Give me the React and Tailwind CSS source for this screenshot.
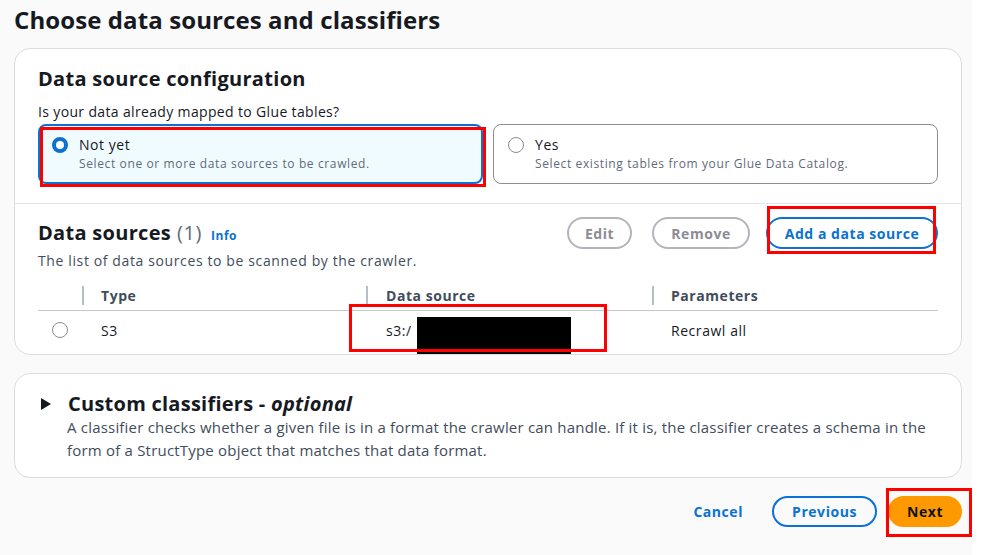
import React from 'react';

const Radio = ({ checked }) =>
    checked ? (
        <span className="w-4 h-4 rounded-full border-[4px] border-[#0972d3] bg-white shrink-0" />
    ) : (
        <span className="w-4 h-4 rounded-full border-[1.5px] border-[#8c8c94] bg-white shrink-0" />
    );

const RedBox = ({ className }) => (
    <div className={`absolute border-[3px] border-[#ff0000] pointer-events-none ${className}`} />
);

export default function App() {
    return (
        <div className="w-[984px] h-[555px] flex bg-white text-[#16191f] overflow-hidden tracking-[0.55px] font-['Open_Sans',sans-serif]">
            <div className="w-[972px] bg-[#fafafa] pl-[14px] pr-[10px]">
                <h1 className="pt-[5px] text-[24px] leading-[30px] font-bold tracking-[0.1px]">Choose data sources and classifiers</h1>

                {/* Data source configuration card */}
                <div className="relative mt-[13px] bg-white border border-[#dcdcdf] rounded-[16px]">
                    <div className="px-[23px] pt-[16px] pb-[19px]">
                        <h2 className="text-[20px] leading-[28px] font-bold tracking-[0.3px]">Data source configuration</h2>
                        <p className="mt-[9px] text-[14px] leading-[20px] tracking-[0.35px]">Is your data already mapped to Glue tables?</p>
                        <div className="mt-[2px] grid grid-cols-2 gap-[10px]">
                            <div className="relative h-[60px] rounded-[8px] border-2 border-[#0972d3] bg-[#f0fbff] flex items-start gap-[11px] pl-[12px] pt-[9px]">
                                <span className="mt-[2px] flex"><Radio checked /></span>
                                <div>
                                    <div className="text-[14px] leading-[20px]">Not yet</div>
                                    <div className="text-[12px] leading-[16px] mt-[1px] text-[#5f6b7a] tracking-[0.62px]">Select one or more data sources to be crawled.</div>
                                </div>
                                <RedBox className="left-0 top-[1px] w-[446px] h-[60px]" />
                            </div>
                            <div className="h-[60px] rounded-[8px] border border-[#8c8c94] bg-white flex items-start gap-[11px] pl-[14px] pt-[10px]">
                                <span className="mt-[2px] flex"><Radio /></span>
                                <div>
                                    <div className="text-[14px] leading-[20px]">Yes</div>
                                    <div className="text-[12px] leading-[16px] mt-[1px] text-[#5f6b7a] tracking-[0.62px]">Select existing tables from your Glue Data Catalog.</div>
                                </div>
                            </div>
                        </div>
                    </div>

                    <div className="h-px bg-[#e3e5e8]" />

                    <div className="px-[23px] pt-[13px]">
                        <div className="flex items-center justify-between">
                            <div className="flex items-baseline">
                                <span className="text-[20px] leading-[28px] font-bold tracking-[0.3px]">Data sources</span>
                                <span className="ml-[6px] text-[20px] leading-[28px] text-[#5f6b7a]">(1)</span>
                                <span className="ml-[9px] text-[12px] font-bold text-[#0972d3]">Info</span>
                            </div>
                            <div className="flex items-center">
                                <button className="w-[65px] h-[32px] rounded-full border-2 border-[#b4b4bb] text-[14px] font-bold text-[#8c8c94]">Edit</button>
                                <button className="ml-[20px] w-[98px] h-[32px] rounded-full border-2 border-[#b4b4bb] text-[14px] font-bold text-[#8c8c94]">Remove</button>
                                <div className="relative ml-[16px]">
                                    <button className="w-[172px] h-[32px] rounded-full border-2 border-[#0972d3] text-[14px] font-bold text-[#0972d3]">Add a data source</button>
                                    <RedBox className="left-[1px] -top-[11px] w-[169px] h-[48px]" />
                                </div>
                            </div>
                        </div>
                        <p className="mt-[2px] text-[14px] leading-[20px] text-[#414d5c] tracking-[0.62px]">The list of data sources to be scanned by the crawler.</p>

                        <div className="mt-[8px]">
                            <div className="flex h-[32px] items-center pt-[1px] border-b border-[#c6c6cd] text-[14px] font-bold text-[#414d5c]">
                                <div className="w-[44px]" />
                                <div className="w-[284px] flex items-center">
                                    <span className="w-[2px] h-[19px] bg-[#b6bec9]" />
                                    <span className="ml-[17px]">Type</span>
                                </div>
                                <div className="w-[286px] flex items-center">
                                    <span className="w-[2px] h-[19px] bg-[#b6bec9]" />
                                    <span className="ml-[18px]">Data source</span>
                                </div>
                                <div className="flex items-center">
                                    <span className="w-[2px] h-[19px] bg-[#b6bec9]" />
                                    <span className="ml-[17px]">Parameters</span>
                                </div>
                            </div>
                            <div className="flex h-[43px] items-start pt-[10px] text-[14px] leading-[20px]">
                                <div className="w-[44px] pl-[14px] pt-[1px] flex"><Radio /></div>
                                <div className="w-[284px] pl-[19px]">S3</div>
                                <div className="relative w-[286px] pl-[20px]">
                                    <span>s3:/</span>
                                    <div className="absolute left-[51px] -top-[4px] w-[154px] h-[37px] bg-black" />
                                    <RedBox className="-left-[17px] -top-[17px] w-[258px] h-[48px]" />
                                </div>
                                <div className="pl-[19px]">Recrawl all</div>
                            </div>
                        </div>
                    </div>
                </div>

                {/* Custom classifiers card */}
                <div className="mt-[18px] h-[105px] bg-white border border-[#dcdcdf] rounded-[16px] pl-[24px] pr-[20px] pt-[16px]">
                    <div className="flex items-center">
                        <svg width="12" height="14" viewBox="0 0 12 14" className="ml-[1px]">
                            <path d="M1 1 L11 7 L1 13 Z" fill="#16191f" />
                        </svg>
                        <h2 className="ml-[16px] text-[20px] leading-[28px] font-bold tracking-[0.25px]">
                            Custom classifiers - <i>optional</i>
                        </h2>
                    </div>
                    <p className="ml-[28px] -mt-[2px] text-[15px] leading-[23px] text-[#414d5c] tracking-[0.2px] whitespace-nowrap">
                        A classifier checks whether a given file is in a format the crawler can handle. If it is, the classifier creates a schema in the
                        <br />
                        form of a StructType object that matches that data format.
                    </p>
                </div>

                {/* Footer */}
                <div className="mt-[17px] flex items-center justify-end">
                    <button className="px-[14px] h-[32px] text-[14px] font-bold text-[#0972d3]">Cancel</button>
                    <button className="ml-[15px] w-[105px] h-[31px] rounded-full border-2 border-[#0972d3] text-[14px] font-bold text-[#0972d3]">Previous</button>
                    <div className="relative ml-[11px]">
                        <button className="w-[74px] h-[31px] rounded-full bg-[#ff9900] text-[14px] font-bold text-[#0f141a]">Next</button>
                        <RedBox className="-left-[2px] -top-[8px] w-[86px] h-[49px]" />
                    </div>
                </div>
            </div>
            <div className="flex-1 bg-white" />
        </div>
    );
}
